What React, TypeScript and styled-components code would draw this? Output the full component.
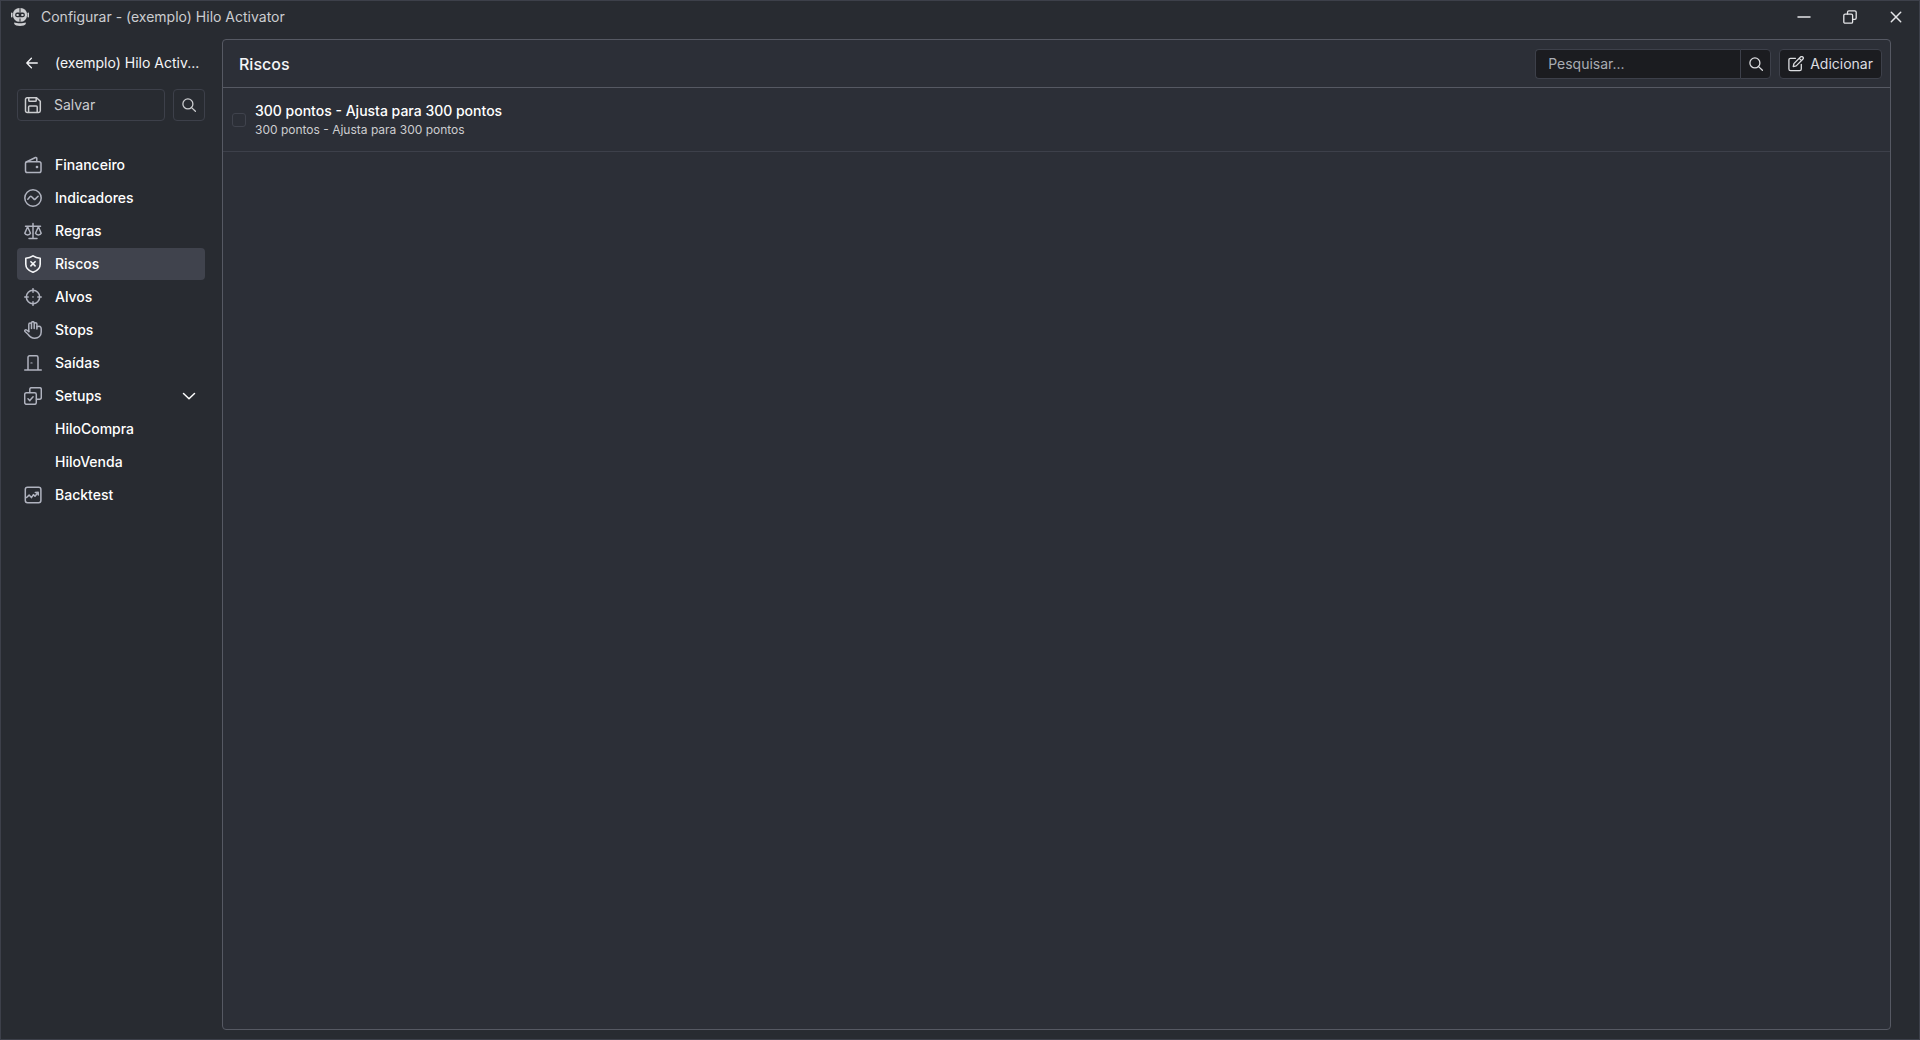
import React, { useState } from "react";
import styled, { createGlobalStyle } from "styled-components";

const GlobalStyle = createGlobalStyle`
  *, *::before, *::after { box-sizing: border-box; }
  body { margin: 0; background: #282b31; }
  button, input { font: inherit; color: inherit; margin: 0; }
  button { cursor: pointer; }
`;

const Window = styled.div`
  display: flex;
  flex-direction: column;
  min-height: 100vh;
  border: 1px solid #3d404a;
  background: #282b31;
  color: #f4f5f7;
  font-family: Inter, "Liberation Sans", sans-serif;
  font-size: 14px;
  line-height: 20px;
`;

const TitleBar = styled.header`
  display: flex;
  align-items: center;
  height: 32px;
  padding-left: 10px;
  color: #cccdd0;
`;

const WindowTitle = styled.span`
  flex: 1;
  padding-left: 12px;
`;

const WindowButton = styled.button`
  display: flex;
  align-items: center;
  justify-content: center;
  width: 46px;
  height: 30px;
  padding: 0;
  border: 0;
  background: none;
  color: #e4e5e8;
`;

const Body = styled.div`
  flex: 1;
  display: flex;
  padding: 6px 28px 9px 0;
`;

const Sidebar = styled.aside`
  flex: none;
  width: 221px;
  padding: 8px 17px 0 16px;
`;

const BackRow = styled.div`
  display: flex;
  align-items: center;
  height: 32px;
`;

const BackButton = styled.button`
  display: flex;
  align-items: center;
  justify-content: center;
  flex: none;
  width: 30px;
  height: 32px;
  padding: 0;
  border: 0;
  background: none;
`;

const RobotName = styled.span`
  flex: 1;
  padding-left: 8px;
  overflow: hidden;
  white-space: nowrap;
  text-overflow: ellipsis;
`;

const ActionRow = styled.div`
  display: flex;
  gap: 8px;
  padding-top: 10px;
`;

const OutlineButton = styled.button<{ $square?: boolean }>`
  display: flex;
  align-items: center;
  justify-content: ${(p) => (p.$square ? "center" : "flex-start")};
  gap: 12px;
  flex: ${(p) => (p.$square ? "none" : "1")};
  width: ${(p) => (p.$square ? "32px" : "auto")};
  height: 32px;
  padding: ${(p) => (p.$square ? "0" : "0 6px")};
  border: 1px solid #3d404a;
  border-radius: 4px;
  background: none;
  color: #cccdd0;
`;

const Nav = styled.nav`
  padding-top: 28px;
`;

const NavList = styled.ul`
  display: flex;
  flex-direction: column;
  gap: 1px;
  margin: 0;
  padding: 0;
  list-style: none;
`;

const NavLink = styled.a<{ $active?: boolean }>`
  display: flex;
  align-items: center;
  gap: 13px;
  height: 32px;
  padding: 0 7px;
  border-radius: 4px;
  background: ${(p) => (p.$active ? "#40434d" : "transparent")};
  color: #ffffff;
  font-weight: 500;
  text-decoration: none;

  & > svg:first-child { color: ${(p) => (p.$active ? "#f4f5f7" : "#b0b3bf")}; }
`;

const SubLink = styled(NavLink)`
  padding-left: 38px;
`;

const NavLabel = styled.span`
  flex: 1;
`;

const Panel = styled.main`
  flex: 1;
  min-width: 0;
  border: 1px solid #565963;
  border-radius: 4px;
  background: #2c2f37;
`;

const PanelHeader = styled.div`
  display: flex;
  align-items: center;
  justify-content: space-between;
  height: 48px;
  padding: 0 8px 0 16px;
  border-bottom: 1px solid #565963;
`;

const PanelTitle = styled.h1`
  margin: 0;
  font-size: 16px;
  line-height: 20px;
  font-weight: 500;
`;

const Tools = styled.div`
  display: flex;
  gap: 8px;
`;

const SearchForm = styled.form`
  display: flex;
`;

const SearchInput = styled.input`
  width: 205px;
  height: 30px;
  padding: 0 12px;
  border: 1px solid #3d404a;
  border-right: 0;
  border-radius: 4px 0 0 4px;
  background: #1b1c20;
  outline: none;

  &::placeholder { color: #a9acb3; opacity: 1; }
`;

const DarkButton = styled.button<{ $joined?: boolean }>`
  display: flex;
  align-items: center;
  justify-content: center;
  gap: 6px;
  height: 30px;
  min-width: 31px;
  padding: ${(p) => (p.$joined ? "0" : "0 8px")};
  border: 1px solid #3d404a;
  border-radius: ${(p) => (p.$joined ? "0 4px 4px 0" : "4px")};
  background: #1b1c20;
  color: #dcdde0;
`;

const RiskList = styled.ul`
  margin: 0;
  padding: 0;
  list-style: none;
`;

const RiskRow = styled.li`
  border-bottom: 1px solid #3d404a;
`;

const RiskLabel = styled.label`
  display: flex;
  align-items: center;
  gap: 9px;
  height: 63px;
  padding: 0 9px;
`;

const CheckBox = styled.input`
  appearance: none;
  width: 14px;
  height: 14px;
  border: 1px solid #40434d;
  border-radius: 3px;

  &:checked { background: #a9acb8; }
`;

const RiskText = styled.span`
  display: flex;
  flex-direction: column;
`;

const RiskName = styled.span`
  color: #ffffff;
  font-weight: 500;
  line-height: 20px;
`;

const RiskDetail = styled.span`
  font-size: 12px;
  line-height: 18px;
  color: #cccdd0;
`;

type IconProps = { size?: number; width?: number; children: React.ReactNode };

const Icon = ({ size = 18, width = 1.5, children }: IconProps) => (
  <svg
    width={size}
    height={size}
    viewBox={`0 0 ${size} ${size}`}
    fill="none"
    stroke="currentColor"
    strokeWidth={width}
    strokeLinecap="round"
    strokeLinejoin="round"
    aria-hidden="true"
  >
    {children}
  </svg>
);

const RobotLogo = () => (
  <svg width="18" height="18" viewBox="0 0 18 18" aria-hidden="true">
    <rect x="2" y="0" width="14" height="13.800" rx="6.400" fill="#cccdd0" />
    <rect x="0" y="4.500" width="1.500" height="5" rx=".7" fill="#cccdd0" />
    <rect x="16.500" y="4.500" width="1.500" height="5" rx=".7" fill="#cccdd0" />
    <path d="M9 0v4.500M9 10.500v3.300" stroke="#282b31" strokeWidth="1" />
    <rect x="4.200" y="4.500" width="9.600" height="4.800" rx="2" fill="#282b31" />
    <rect x="5.500" y="6" width="2.200" height="2" rx=".5" fill="#cccdd0" />
    <rect x="10.300" y="6" width="2.200" height="2" rx=".5" fill="#cccdd0" />
    <path d="M3.200 14.500c3 1.100 8.600 1.100 11.600 0v1.300c-1 2.900-10.600 2.900-11.600 0Z" fill="#cccdd0" />
  </svg>
);

const SearchIcon = () => (
  <Icon size={14} width={1.3}>
    <circle cx="5.900" cy="5.900" r="5" />
    <path d="m9.600 9.600 3.800 3.600" />
  </Icon>
);

const WalletIcon = () => (
  <Icon>
    <rect x="1.500" y="5.700" width="15.500" height="10.800" rx="1.800" />
    <path d="M2.200 6 11.500 1.500a.9.9 0 0 1 1.300.8v3.200" />
    <circle cx="13" cy="11" r=".6" fill="currentColor" />
  </Icon>
);

const PulseIcon = () => (
  <Icon>
    <circle cx="9" cy="9" r="8.200" />
    <path d="M3.800 10.300 6.200 7.500q.6-.6 1.200 0l2.600 2.600q.6.6 1.200 0l2.900-2.900" />
  </Icon>
);

const ScaleIcon = () => (
  <Icon>
    <path d="M9 1.500v14.800M5 16.400h8M1.500 4.300h15" />
    <path d="M3.600 4.800.8 11.300c.8 2.200 4.900 2.200 5.700 0ZM14.400 4.800l-2.900 6.500c.8 2.200 4.900 2.200 5.700 0Z" />
  </Icon>
);

const ShieldIcon = () => (
  <Icon width={1.6}>
    <path d="M9 .8C6.800 2.300 4.500 3 1.800 3.200v6c0 4 2.800 6.500 7.200 8.100 4.400-1.600 7.200-4.100 7.200-8.100v-6C13.500 3 11.200 2.300 9 .8Z" />
    <path d="m6.900 6.700 4.200 4.200M11.100 6.700l-4.200 4.200" />
  </Icon>
);

const TargetIcon = () => (
  <Icon>
    <circle cx="9" cy="9" r="6.700" />
    <path d="M9 .7v3.500M9 13.800v3.500M.7 9h3.500M13.800 9h3.500" />
    <circle cx="9" cy="9" r=".2" />
  </Icon>
);

const HandIcon = () => (
  <Icon>
    <path d="M4.800 10.500V3.400a1.300 1.300 0 0 1 2.700 0V7.500M7.500 7.500V2a1.300 1.300 0 0 1 2.700 0v5.500M10.200 7.500V3a1.300 1.300 0 0 1 2.700 0V8" />
    <path d="M12.900 5.800c2.600-1.200 4.300-.2 4.300 2V11c0 3.900-2.700 6.200-6.500 6.200-3.200 0-4.900-1.300-6.500-3.700L1 10.500c-.7-1.200.5-2.300 1.600-1.500l2.200 1.700" />
  </Icon>
);

const DoorIcon = () => (
  <Icon>
    <path d="M.7 16h16.600M4 16V3.400c0-1 .6-1.600 1.600-1.600h6.800c1 0 1.600.6 1.600 1.600V16" />
    <circle cx="7.500" cy="9" r=".2" />
  </Icon>
);

const SetupsIcon = () => (
  <Icon>
    <path d="M5.800 5.500V2.300c0-1 .6-1.600 1.600-1.600h8.300c1 0 1.600.6 1.600 1.600v8.300c0 1-.6 1.600-1.600 1.600h-3.200" />
    <rect x=".7" y="5.700" width="11.600" height="11.600" rx="1.700" />
    <path d="m4 11.800 1.800 1.800 3.300-3.900" />
  </Icon>
);

const ChartIcon = () => (
  <Icon>
    <rect x="1.300" y="1.300" width="15.600" height="15.400" rx="2.200" />
    <path d="m2.600 11.500 2.500-2.400 2.300 2.500 2-3 1.600 1.600 3-3.700M11.300 6.400l2.900-.2.100 2.800" />
  </Icon>
);

const SaveIcon = () => (
  <Icon>
    <path d="M3.200 1.700h9.400l3.700 3.600v9.400c0 1-.7 1.700-1.700 1.700H3.200c-1 0-1.700-.7-1.700-1.700V3.400c0-1 .7-1.700 1.700-1.700Z" />
    <path d="M4.800 1.900v2.500c0 .6.300.9.900.9h5.600c.6 0 .9-.3.900-.9V1.900M4.600 16.200v-5.300c0-.6.400-1 1-1h6.600c.6 0 1 .4 1 1v5.300" />
  </Icon>
);

const EditIcon = () => (
  <Icon size={16} width={1.3}>
    <path d="M7.500 2.300H2.600C1.500 2.300.9 2.900.9 4v9c0 1.100.6 1.700 1.700 1.700h9c1.100 0 1.700-.6 1.700-1.700V8.300" />
    <path d="m5.200 10.700.7-3.100L12.500 1a1.450 1.450 0 0 1 2.300 2.300L8.200 9.900ZM11.300 2.400l2.200 2.200" />
  </Icon>
);

const sections = [
  { label: "Financeiro", icon: <WalletIcon /> },
  { label: "Indicadores", icon: <PulseIcon /> },
  { label: "Regras", icon: <ScaleIcon /> },
  { label: "Riscos", icon: <ShieldIcon /> },
  { label: "Alvos", icon: <TargetIcon /> },
  { label: "Stops", icon: <HandIcon /> },
  { label: "Saídas", icon: <DoorIcon /> },
  { label: "Setups", icon: <SetupsIcon />, items: ["HiloCompra", "HiloVenda"] },
  { label: "Backtest", icon: <ChartIcon /> },
];

const risks = [
  { name: "300 pontos - Ajusta para 300 pontos", detail: "300 pontos - Ajusta para 300 pontos" },
];

export default function App() {
  const [active, setActive] = useState("Riscos");

  return (
    <>
      <GlobalStyle />
      <Window>
        <TitleBar>
          <RobotLogo />
          <WindowTitle>Configurar - (exemplo) Hilo Activator</WindowTitle>
          <WindowButton aria-label="Minimizar">
            <Icon size={14} width={1.5}><path d="M1 7h12" /></Icon>
          </WindowButton>
          <WindowButton aria-label="Restaurar">
            <Icon size={14} width={1.3}>
              <rect x=".8" y="4.200" width="8.800" height="9" rx="1.300" />
              <path d="M4.500 4V2.200c0-.9.500-1.400 1.400-1.400h5.900c.9 0 1.400.5 1.400 1.400V8c0 .9-.5 1.400-1.400 1.400H9.800" />
            </Icon>
          </WindowButton>
          <WindowButton aria-label="Fechar">
            <Icon size={12} width={1.5}><path d="m1.300 1.300 9.400 9.400M10.700 1.300l-9.400 9.400" /></Icon>
          </WindowButton>
        </TitleBar>
        <Body>
          <Sidebar>
            <BackRow>
              <BackButton aria-label="Voltar">
                <Icon size={12} width={1.3}><path d="M11.300 6H.9M5.400 1.300.8 6l4.600 4.700" /></Icon>
              </BackButton>
              <RobotName>(exemplo) Hilo Activ...</RobotName>
            </BackRow>
            <ActionRow>
              <OutlineButton><SaveIcon />Salvar</OutlineButton>
              <OutlineButton $square aria-label="Buscar"><SearchIcon /></OutlineButton>
            </ActionRow>
            <Nav>
              <NavList>
                {sections.map(({ label, icon, items }) => (
                  <React.Fragment key={label}>
                    <li>
                      <NavLink href="#" $active={active === label} onClick={() => setActive(label)}>
                        {icon}
                        <NavLabel>{label}</NavLabel>
                        {items && <Icon size={18} width={1.5}><path d="M3.500 6.500 9 11.700l5.500-5.200" /></Icon>}
                      </NavLink>
                    </li>
                    {items?.map((item) => (
                      <li key={item}><SubLink href="#">{item}</SubLink></li>
                    ))}
                  </React.Fragment>
                ))}
              </NavList>
            </Nav>
          </Sidebar>
          <Panel>
            <PanelHeader>
              <PanelTitle>Riscos</PanelTitle>
              <Tools>
                <SearchForm onSubmit={(e) => e.preventDefault()}>
                  <SearchInput aria-label="Pesquisar" placeholder="Pesquisar..." />
                  <DarkButton $joined aria-label="Pesquisar"><SearchIcon /></DarkButton>
                </SearchForm>
                <DarkButton><EditIcon />Adicionar</DarkButton>
              </Tools>
            </PanelHeader>
            <RiskList>
              {risks.map((risk) => (
                <RiskRow key={risk.name}>
                  <RiskLabel>
                    <CheckBox type="checkbox" />
                    <RiskText>
                      <RiskName>{risk.name}</RiskName>
                      <RiskDetail>{risk.detail}</RiskDetail>
                    </RiskText>
                  </RiskLabel>
                </RiskRow>
              ))}
            </RiskList>
          </Panel>
        </Body>
      </Window>
    </>
  );
}
